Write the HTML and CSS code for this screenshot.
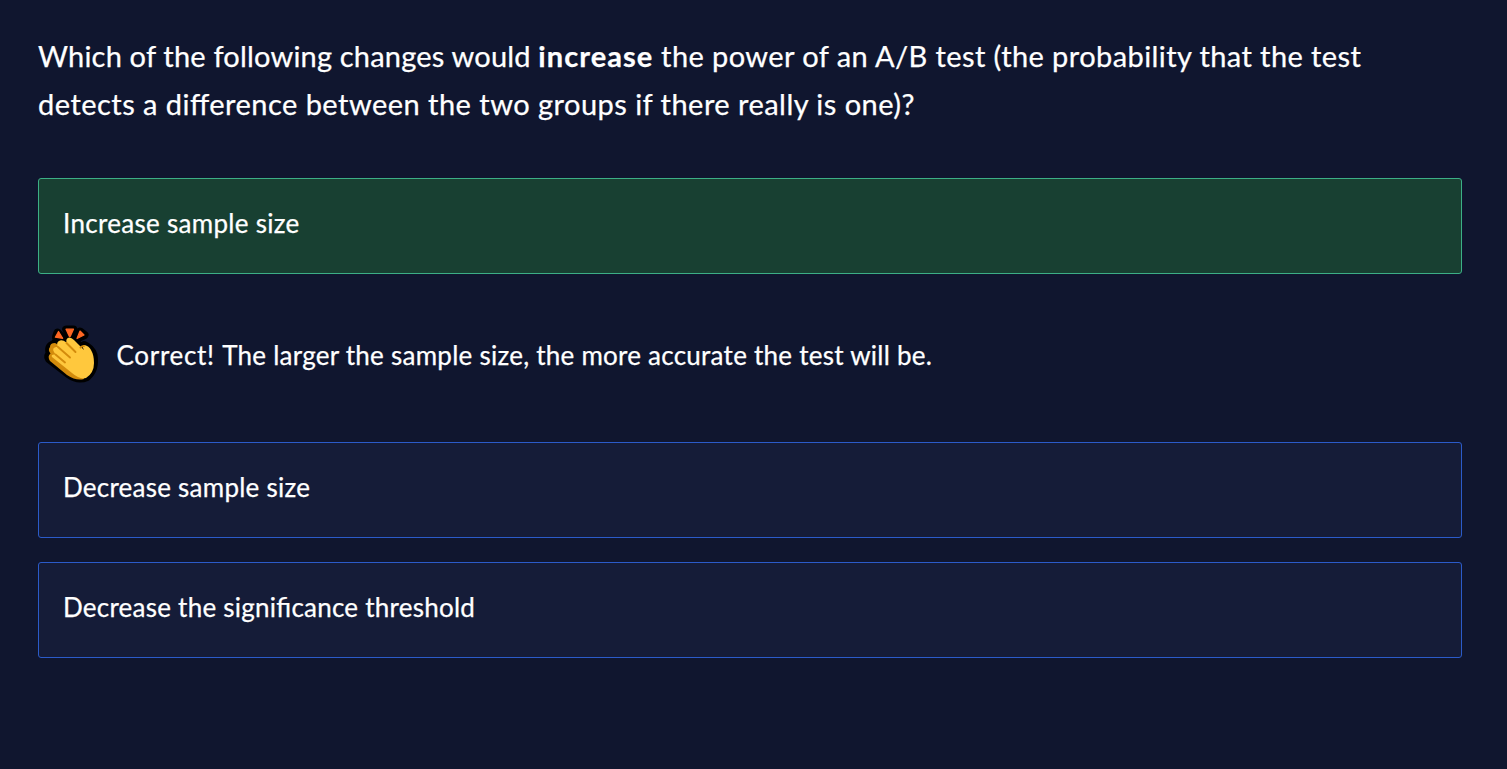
FILE: index.html
```html
<!DOCTYPE html>
<html lang="en">
<head>
<meta charset="utf-8">
<title>Quiz</title>
<link rel="stylesheet" href="styles.css">
</head>
<body>
<main class="quiz">
  <h1 class="question"><span class="line"><span class="lead">Which of the following changes would </span><strong>increase</strong> the power of an A/B test (the probability that the test</span> <span class="line second">detects a difference between the two groups if there really is one)?</span></h1>
  <div class="option correct">Increase sample size</div>
  <div class="feedback">
    <svg class="clap" viewBox="0 0 66 66" aria-hidden="true">
      <g fill="#000" stroke="#000" stroke-width="8" stroke-linejoin="round">
        <path d="M28.200 5.500 H35.300 L32 12 Z M19.500 8.500 L24.500 14 L18 13 Z M42 7.500 L46.500 11 L40 14 Z"/>
        <path d="M20 17 Q23 15 26 17 Q30 12 34 15 L44 24 L46 21 Q53 24 55.500 31 Q58 45 49 53 Q40 57 31 50.500 L11 35 Q9 32 12 30 Q9 22 16 20 Q17 18 20 17 Z"/>
      </g>
      <path d="M28 5.200 H35.500 L32.300 12.300 H31.300 Z M20.500 7.500 L24.700 14.300 L17.300 13.200 Z M42 7 L46 11 L39 14.500 Z" fill="#ff6723" stroke="#ff6723" stroke-width="1.200" stroke-linejoin="round"/>
      <path d="M17 19 Q12 19 12 23 Q9.500 26 12.500 29.500 Q9 32 12 37 L29 51 Q38 57 46 55 L34 28 Z" fill="#d38b0c"/>
      <path d="M22 16.500 Q24.500 15.500 28.500 18.500 Q27.500 14 31.500 13.500 Q33.500 13.500 36 16 L46 26 Q43 21 46.500 21 Q51 22 53 26 Q56 31 56 39 Q56 49 48 54 Q42 56 34 49 L14 33 Q12.500 30 17.500 30.500 L16 28 Q13.500 24 18 23 L20 23 Q17.500 18 22 16.500 Z" fill="#ffc83d"/>
      <path d="M17.500 30.500 L27 38.500 M20 23 L32 33.500 M28.500 19 L37.500 28 M42.500 23.500 Q44 22 46 22" fill="none" stroke="#d38b0c" stroke-width="1.900" stroke-linecap="round"/>
    </svg>
    <p class="feedback-text"><span class="verdict">Correct! </span>The larger the sample size, the more accurate the test will be.</p>
  </div>
  <div class="option">Decrease sample size</div>
  <div class="option last">Decrease the significance threshold</div>
</main>
</body>
</html>
```
FILE: styles.css
```css
* { box-sizing: border-box; }
body {
  margin: 0;
  min-height: 769px;
  background: #10162f;
  color: #fff;
  font-family: Lato, "Liberation Sans", sans-serif;
  font-feature-settings: "liga" 1;
  -webkit-text-stroke: 0.25px #fff;
}
.quiz { padding: 32px 45px 0 38px; }
.question {
  margin: 0 0 50px;
  font-size: 29px;
  font-weight: 400;
  line-height: 48px;
  letter-spacing: 0.41px;
}
.line { display: block; white-space: nowrap; }
.second { letter-spacing: 0.47px; }
.lead { letter-spacing: 0.19px; }
.question strong { letter-spacing: 1.05px; }
.option {
  height: 96px;
  padding: 24px;
  border: 1px solid #2b5bc9;
  border-radius: 3px;
  background: #151c38;
  font-size: 26px;
  line-height: 40px;
  letter-spacing: 0.24px;
  white-space: nowrap;
}
.correct {
  border-color: #3caf86;
  background: #184032;
  letter-spacing: 0.3px;
}
.feedback {
  display: flex;
  align-items: center;
  height: 168px;
}
.clap { width: 66px; height: 66px; margin-top: -2px; }
.feedback-text {
  margin: -6px 0 0 12.5px;
  font-size: 26px;
  line-height: 40px;
  letter-spacing: 0.25px;
  white-space: nowrap;
}
.verdict { letter-spacing: 0.7px; }
.last { margin-top: 24px; }
```
